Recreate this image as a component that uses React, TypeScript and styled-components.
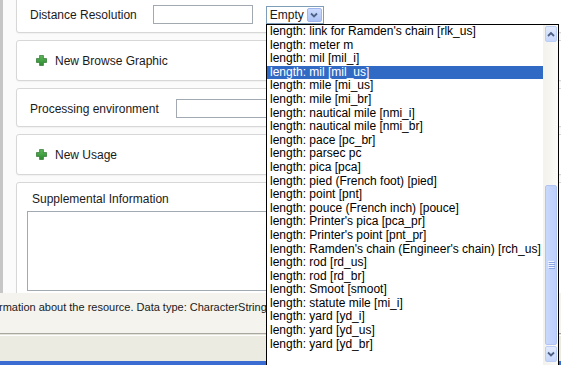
import React from "react";
import styled, { createGlobalStyle } from "styled-components";

const Global = createGlobalStyle`
  html, body { margin: 0; padding: 0; }
  body {
    width: 561px;
    height: 365px;
    overflow: hidden;
    background: #fff;
    font-family: "Liberation Sans", Arial, sans-serif;
  }
  * { box-sizing: border-box; }
`;

const Page = styled.div`
  position: relative;
  width: 561px;
  height: 365px;
  overflow: hidden;
  display: flex;
  flex-direction: column;
  color: #1a1a1a;
`;

const Panel = styled.div`
  flex: none;
  height: 293px;
  display: flex;
  overflow: hidden;
  background: #fbfbfb;
`;

const SideStrip = styled.div`
  flex: none;
  width: 3px;
  background: #c6c6c6;
`;

const Cards = styled.div`
  flex: 1;
  display: flex;
  flex-direction: column;
  gap: 7px;
  margin: -6px -60px 0 13px;
`;

const Card = styled.div`
  flex: none;
  background: #fff;
  border: 1px solid #d7d7d7;
  border-radius: 3px;
  box-shadow: 0 1px 1px rgba(0, 0, 0, 0.04);
`;

const FieldCard = styled(Card)`
  display: flex;
  align-items: center;
  padding: 10px 0 8px 13px;
`;

const LinkCard = styled(Card)`
  height: 41px;
  display: flex;
  align-items: center;
  gap: 8px;
  padding-left: 19px;
`;

const TextCard = styled(Card)`
  display: flex;
  flex-direction: column;
  padding: 9px 0 0 10px;
  height: 160px;
`;

const Label = styled.span<{ $space?: number }>`
  font-size: 12px;
  line-height: 14px;
  white-space: nowrap;
  margin-right: ${(p) => p.$space ?? 0}px;
`;

const TextLabel = styled(Label)`
  margin-left: 5px;
`;

const TextInput = styled.div<{ $w: number; $space?: number }>`
  flex: none;
  width: ${(p) => p.$w}px;
  height: 19px;
  border: 1px solid #a2a9b1;
  background: #fff;
  margin-right: ${(p) => p.$space ?? 0}px;
`;

const TextArea = styled.div`
  margin-top: 5px;
  width: 520px;
  height: 80px;
  border: 1px solid #a2a9b1;
  background: #fff;
`;

const Combo = styled.div`
  flex: none;
  width: 58px;
  height: 18px;
  border: 1px solid #7f9db9;
  background: #fff;
  display: flex;
  align-items: center;
  justify-content: space-between;
  padding: 0 1px 0 3px;
  font-size: 12px;
  line-height: 14px;
`;

const ComboButton = styled.div`
  width: 15px;
  height: 14px;
  border: 1px solid #9fb6ee;
  border-radius: 2px;
  background: linear-gradient(#cddbfd, #adc3f6);
  display: flex;
  align-items: center;
  justify-content: center;
`;

const StatusArea = styled.div`
  flex: none;
  height: 40px;
  background: #f4f3ee;
  font-size: 11px;
  line-height: 13px;
  padding-top: 8px;
  white-space: nowrap;
  overflow: hidden;
`;

const StatusText = styled.span`
  display: inline-block;
  margin-left: -1px;
`;

const Separator = styled.div`
  flex: none;
  height: 3px;
  border-top: 1px solid #a9a8a0;
  border-bottom: 1px solid #fdfdfb;
  background: #e4e3da;
`;

const BottomBar = styled.div`
  flex: none;
  height: 25px;
  background: #ecebe2;
`;

const TitleStrip = styled.div`
  flex: 1;
  background: #3a6cd2;
`;

const Dropdown = styled.div`
  position: absolute;
  left: 266px;
  top: 24px;
  width: 293px;
  height: 342px;
  border: 1px solid #000;
  background: #fff;
  display: flex;
`;

const List = styled.ul`
  flex: 1;
  margin: 0;
  padding: 0;
  list-style: none;
  overflow: hidden;
`;

const Item = styled.li<{ $selected?: boolean }>`
  height: 13.6px;
  line-height: 13.6px;
  font-size: 12px;
  padding-left: 3px;
  white-space: nowrap;
  overflow: hidden;
  background: ${(p) => (p.$selected ? "#316ac5" : "transparent")};
  color: ${(p) => (p.$selected ? "#fff" : "#000")};
`;

const ScrollBar = styled.div`
  flex: none;
  width: 15px;
  display: flex;
  flex-direction: column;
  padding: 1px 1px 3px 2px;
  background: linear-gradient(90deg, #f3f2ec, #fbfbf8);
`;

const ArrowButton = styled.div`
  flex: none;
  height: 16px;
  border: 1px solid #bccdf6;
  border-radius: 2px;
  background: linear-gradient(#e2eafd, #c6d6fb);
  display: flex;
  align-items: center;
  justify-content: center;
`;

const Track = styled.div`
  flex: 1;
  display: flex;
  flex-direction: column;
`;

const Thumb = styled.div`
  flex: none;
  border: 1px solid #b2c5f2;
  border-radius: 2px;
  background: linear-gradient(90deg, #c9d9fd, #bccffb);
  display: flex;
  align-items: center;
  justify-content: center;
`;

const Plus = () => (
  <svg width="11" height="11" viewBox="0 0 11 11">
    <defs>
      <linearGradient id="pg" x1="0" y1="0" x2="0" y2="1">
        <stop offset="0" stopColor="#5cb85a" />
        <stop offset="1" stopColor="#2f8a30" />
      </linearGradient>
    </defs>
    <path
      d="M3.6 0.4h3.8v3.2h3.2v3.8H7.4v3.2H3.6V7.4H0.4V3.6h3.2z"
      fill="url(#pg)"
      stroke="#2a6f2a"
      strokeWidth="0.7"
    />
  </svg>
);

const Chevron = ({ up }: { up?: boolean }) => (
  <svg width="8" height="6" viewBox="0 0 8 6">
    <path
      d={up ? "M1 5 L4 2 L7 5" : "M1 1.5 L4 4.5 L7 1.5"}
      fill="none"
      stroke="#4d6185"
      strokeWidth="1.8"
    />
  </svg>
);

const Grip = () => (
  <svg width="7" height="8" viewBox="0 0 7 8">
    {[0, 2, 4, 6].map((y) => (
      <g key={y}>
        <rect x="0" y={y} width="6" height="1" fill="#eef3fe" />
        <rect x="1" y={y + 1} width="6" height="1" fill="#8ca6e6" />
      </g>
    ))}
  </svg>
);

const items = [
  "length: link for Ramden's chain [rlk_us]",
  "length: meter m",
  "length: mil [mil_i]",
  "length: mil [mil_us]",
  "length: mile [mi_us]",
  "length: mile [mi_br]",
  "length: nautical mile [nmi_i]",
  "length: nautical mile [nmi_br]",
  "length: pace [pc_br]",
  "length: parsec pc",
  "length: pica [pca]",
  "length: pied (French foot) [pied]",
  "length: point [pnt]",
  "length: pouce (French inch) [pouce]",
  "length: Printer's pica [pca_pr]",
  "length: Printer's point [pnt_pr]",
  "length: Ramden's chain (Engineer's chain) [rch_us]",
  "length: rod [rd_us]",
  "length: rod [rd_br]",
  "length: Smoot [smoot]",
  "length: statute mile [mi_i]",
  "length: yard [yd_i]",
  "length: yard [yd_us]",
  "length: yard [yd_br]",
];

const selectedIndex = 3;
const thumbTop = 143;
const thumbHeight = 160;

export default function App() {
  return (
    <>
      <Global />
      <Page>
        <Panel>
          <SideStrip />
          <Cards>
            <FieldCard>
              <Label $space={16}>Distance Resolution</Label>
              <TextInput $w={100} $space={13} />
              <Combo>
                <span>Empty</span>
                <ComboButton>
                  <Chevron />
                </ComboButton>
              </Combo>
            </FieldCard>
            <LinkCard>
              <Plus />
              <Label>New Browse Graphic</Label>
            </LinkCard>
            <FieldCard>
              <Label $space={17}>Processing environment</Label>
              <TextInput $w={300} />
            </FieldCard>
            <LinkCard>
              <Plus />
              <Label>New Usage</Label>
            </LinkCard>
            <TextCard>
              <TextLabel>Supplemental Information</TextLabel>
              <TextArea />
            </TextCard>
          </Cards>
        </Panel>
        <StatusArea>
          <StatusText>rmation about the resource. Data type: CharacterString</StatusText>
        </StatusArea>
        <Separator />
        <BottomBar />
        <TitleStrip />
        <Dropdown>
          <List>
            {items.map((t, i) => (
              <Item key={t} $selected={i === selectedIndex}>
                {t}
              </Item>
            ))}
          </List>
          <ScrollBar>
            <ArrowButton>
              <Chevron up />
            </ArrowButton>
            <Track>
              <Thumb style={{ marginTop: thumbTop, height: thumbHeight }}>
                <Grip />
              </Thumb>
            </Track>
            <ArrowButton>
              <Chevron />
            </ArrowButton>
          </ScrollBar>
        </Dropdown>
      </Page>
    </>
  );
}
